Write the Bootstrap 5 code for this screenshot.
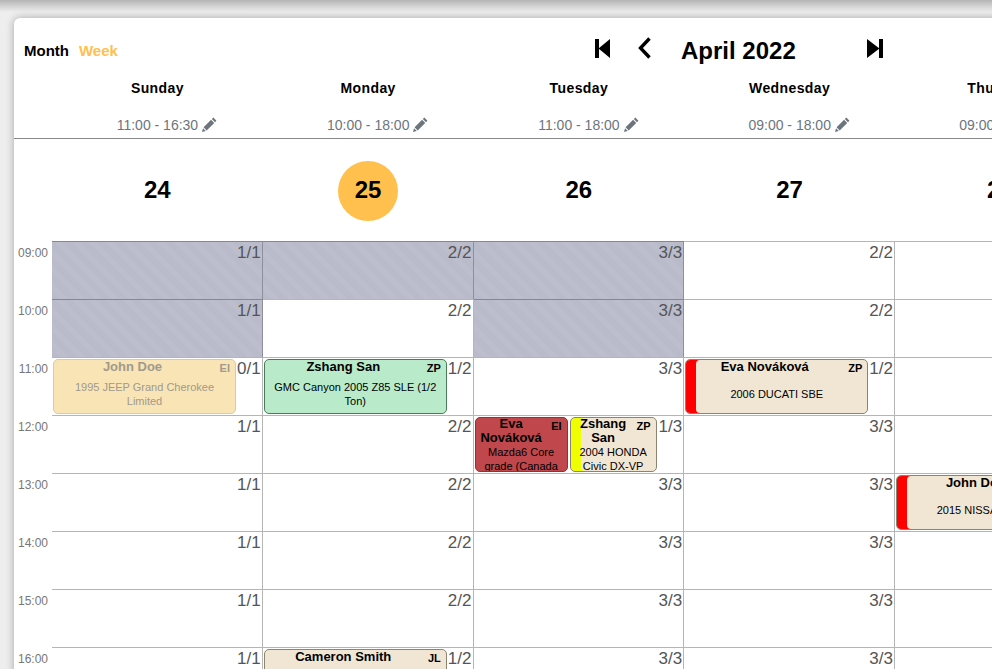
<!doctype html>
<html lang="en">
<head>
<meta charset="utf-8">
<title>Calendar</title>
<link rel="stylesheet" href="https://cdn.jsdelivr.net/npm/bootstrap@5.3.0/dist/css/bootstrap.min.css">
<style>
html,body{height:100%;overflow:hidden}
body{background:#eee;font-family:"Liberation Sans",Arial,sans-serif;color:#000}
.top-shade{height:12px;background:linear-gradient(#b5b5b5,#eee)}
.cal-sheet{margin:6px 0 0 14px;width:1560px;background:#fff;border-radius:6px 0 0 0;box-shadow:0 0 8px rgba(0,0,0,.3)}
.cal-toolbar{height:54px;padding-top:20px}
.view-link{font-size:15px;font-weight:700;color:#000;text-decoration:none;line-height:26px}
.view-link.is-on{color:#ffc04d}
.view-links{gap:10px;padding-left:10px;width:580px}
.nav-ico{display:block;fill:#000;flex:none}
.nav-skip{margin-top:1px}
.nav-back{margin:-1px 0 0 25px}
.month-title{font-size:24px;font-weight:700;line-height:28px;width:185px;margin:-1px 0 0 28px}
.day-heads,.day-nums,.slot-row{display:grid;grid-template-columns:38px repeat(7,210.75px)}
.day-name{font-size:14px;font-weight:700;letter-spacing:.4px;text-align:center;line-height:16px;padding-top:8px;height:44px}
.day-hours{font-size:14px;color:#6c757d;text-align:center;height:22px;line-height:18px}
.day-hours svg{fill:#6c757d;vertical-align:-2px;margin-right:-19px}
.head-rule{border-bottom:1px solid #888}
.day-num{height:102px;display:flex;align-items:center;justify-content:center;font-size:24px;font-weight:700}
.day-num span{width:60px;height:60px;margin-top:2px;padding-bottom:2px;display:flex;align-items:center;justify-content:center;border-radius:50%}
.day-num .is-today{background:#ffc04d}
.slot-row{height:58px}
.hour-lbl{font-size:12px;color:#777;text-align:right;padding:5px 4px 0 0;line-height:14px}
.slot{display:flex;justify-content:flex-end;border-top:1px solid #b5b5b5;border-right:1px solid #b5b5b5;min-width:0;padding-left:1px;overflow:hidden}
.slot.is-off{background:repeating-linear-gradient(45deg,#b9bbcb 0 6px,#bcbecd 6px 12px);border-top-color:#868696;border-right-color:#8f8f9c}
.slot-count{font-size:17px;line-height:20px;color:#555;flex:none;padding:1px 1px 0 1px}
.slot-count.at-left{margin-right:auto}
.appt{flex:none;height:55px;margin-top:1px;border:1px solid #8b8470;border-radius:5px;background:#f1e6d3;position:relative;overflow:hidden;text-align:center;font-size:11px;line-height:14px;color:#000}
.appt.is-wide{width:183px}
.appt.is-first{width:93px;margin-right:2px}
.appt.is-second{width:87px;margin-right:1px}
.appt-name{font-size:13px;font-weight:700;padding-right:20px;line-height:14px;margin-top:-1px}
.appt.is-wide .appt-name{padding-right:24px;margin-top:0}
.appt-init{position:absolute;right:5px;top:2px;font-size:11px;font-weight:700;line-height:13px}
.appt-desc{display:flex;align-items:center;justify-content:center;min-height:28px;margin-top:6px;padding:0 6px}
.appt.is-first .appt-desc,.appt.is-second .appt-desc{display:block;margin-top:0;padding:0 2px}
.appt.is-green{background:#b9ebcb;border-color:#4a7a5a}
.appt.is-ghost{background:#f9e4b6;border-color:#d8cda0;color:#a09a8c}
.appt.is-red{background:#c0474b;border-color:#8b3537}
.appt.has-red{box-shadow:inset 10px 0 0 #f00}
.appt.has-yellow{box-shadow:inset 10px 0 0 #f0ff00}
</style>
</head>
<body>
<div class="top-shade"></div>
<div class="cal-sheet">
  <div class="cal-toolbar d-flex align-items-start">
    <div class="view-links d-flex">
      <a class="view-link" href="#">Month</a>
      <a class="view-link is-on" href="#">Week</a>
    </div>
    <svg class="nav-ico nav-skip" width="18" height="20" viewBox="0 0 18 20"><rect x="1" y="0" width="4" height="19"/><path d="M16 0v19L4.500 9.500z"/></svg>
    <svg class="nav-ico nav-back" width="16" height="24" viewBox="0 0 16 24"><path d="M12.500 1.500 3.500 11 12.500 20.500" fill="none" stroke="#000" stroke-width="3.400"/></svg>
    <div class="month-title">April 2022</div>
    <svg class="nav-ico nav-skip" width="18" height="20" viewBox="0 0 18 20"><rect x="13" y="0" width="4" height="19"/><path d="M1 0v19L13.500 9.500z"/></svg>
  </div>
  <div class="day-heads">
    <div></div>
    <div class="day-name">Sunday</div><div class="day-name">Monday</div><div class="day-name">Tuesday</div><div class="day-name">Wednesday</div><div class="day-name">Thursday</div><div class="day-name">Friday</div><div class="day-name">Saturday</div>
  </div>
  <div class="day-heads head-rule">
    <div></div>
    <div class="day-hours">11:00 - 16:30 <svg width="15" height="15" viewBox="0 0 16 16"><path d="M12.100.6 15.400 3.900 13.800 5.500 10.500 2.200zM9.700 3 13 6.300 5 14.300 1.700 11zM1.100 12 4 14.900 0 16z"/></svg></div>
    <div class="day-hours">10:00 - 18:00 <svg width="15" height="15" viewBox="0 0 16 16"><path d="M12.100.6 15.400 3.900 13.800 5.500 10.500 2.200zM9.700 3 13 6.300 5 14.300 1.700 11zM1.100 12 4 14.900 0 16z"/></svg></div>
    <div class="day-hours">11:00 - 18:00 <svg width="15" height="15" viewBox="0 0 16 16"><path d="M12.100.6 15.400 3.900 13.800 5.500 10.500 2.200zM9.700 3 13 6.300 5 14.300 1.700 11zM1.100 12 4 14.900 0 16z"/></svg></div>
    <div class="day-hours">09:00 - 18:00 <svg width="15" height="15" viewBox="0 0 16 16"><path d="M12.100.6 15.400 3.900 13.800 5.500 10.500 2.200zM9.700 3 13 6.300 5 14.300 1.700 11zM1.100 12 4 14.900 0 16z"/></svg></div>
    <div class="day-hours">09:00 - 18:00 <svg width="15" height="15" viewBox="0 0 16 16"><path d="M12.100.6 15.400 3.900 13.800 5.500 10.500 2.200zM9.700 3 13 6.300 5 14.300 1.700 11zM1.100 12 4 14.900 0 16z"/></svg></div>
    <div class="day-hours"></div><div class="day-hours"></div>
  </div>
  <div class="day-nums">
    <div></div>
    <div class="day-num"><span>24</span></div><div class="day-num"><span class="is-today">25</span></div><div class="day-num"><span>26</span></div><div class="day-num"><span>27</span></div><div class="day-num"><span>28</span></div><div class="day-num"><span>29</span></div><div class="day-num"><span>30</span></div>
  </div>

  <div class="slot-row"><div class="hour-lbl">09:00</div>
    <div class="slot is-off"><span class="slot-count">1/1</span></div><div class="slot is-off"><span class="slot-count">2/2</span></div><div class="slot is-off"><span class="slot-count">3/3</span></div><div class="slot"><span class="slot-count">2/2</span></div><div class="slot"></div>
  </div>
  <div class="slot-row"><div class="hour-lbl">10:00</div>
    <div class="slot is-off"><span class="slot-count">1/1</span></div><div class="slot"><span class="slot-count">2/2</span></div><div class="slot is-off"><span class="slot-count">3/3</span></div><div class="slot"><span class="slot-count">2/2</span></div><div class="slot"></div>
  </div>
  <div class="slot-row"><div class="hour-lbl">11:00</div>
    <div class="slot"><div class="appt is-wide is-ghost"><div class="appt-name">John Doe</div><div class="appt-init">EI</div><div class="appt-desc"><span>1995 JEEP Grand Cherokee Limited</span></div></div><span class="slot-count at-left">0/1</span></div>
    <div class="slot"><div class="appt is-wide is-green"><div class="appt-name">Zshang San</div><div class="appt-init">ZP</div><div class="appt-desc"><span>GMC Canyon 2005 Z85 SLE (1/2 Ton)</span></div></div><span class="slot-count at-left">1/2</span></div>
    <div class="slot"><span class="slot-count">3/3</span></div>
    <div class="slot"><div class="appt is-wide has-red"><div class="appt-name">Eva Nováková</div><div class="appt-init">ZP</div><div class="appt-desc"><span>2006 DUCATI SBE</span></div></div><span class="slot-count at-left">1/2</span></div>
    <div class="slot"></div>
  </div>
  <div class="slot-row"><div class="hour-lbl">12:00</div>
    <div class="slot"><span class="slot-count">1/1</span></div>
    <div class="slot"><span class="slot-count">2/2</span></div>
    <div class="slot"><div class="appt is-first is-red"><div class="appt-name">Eva Nováková</div><div class="appt-init">EI</div><div class="appt-desc">Mazda6 Core grade (Canada</div></div><div class="appt is-second has-yellow"><div class="appt-name">Zshang San</div><div class="appt-init">ZP</div><div class="appt-desc">2004 HONDA Civic DX-VP</div></div><span class="slot-count">1/3</span></div>
    <div class="slot"><span class="slot-count">3/3</span></div>
    <div class="slot"></div>
  </div>
  <div class="slot-row"><div class="hour-lbl">13:00</div>
    <div class="slot"><span class="slot-count">1/1</span></div><div class="slot"><span class="slot-count">2/2</span></div><div class="slot"><span class="slot-count">3/3</span></div><div class="slot"><span class="slot-count">3/3</span></div>
    <div class="slot"><div class="appt is-wide has-red"><div class="appt-name">John Doe</div><div class="appt-desc"><span>2015 NISSAN Altima</span></div></div><span class="slot-count at-left">1/3</span></div>
  </div>
  <div class="slot-row"><div class="hour-lbl">14:00</div>
    <div class="slot"><span class="slot-count">1/1</span></div><div class="slot"><span class="slot-count">2/2</span></div><div class="slot"><span class="slot-count">3/3</span></div><div class="slot"><span class="slot-count">3/3</span></div><div class="slot"></div>
  </div>
  <div class="slot-row"><div class="hour-lbl">15:00</div>
    <div class="slot"><span class="slot-count">1/1</span></div><div class="slot"><span class="slot-count">2/2</span></div><div class="slot"><span class="slot-count">3/3</span></div><div class="slot"><span class="slot-count">3/3</span></div><div class="slot"></div>
  </div>
  <div class="slot-row"><div class="hour-lbl">16:00</div>
    <div class="slot"><span class="slot-count">1/1</span></div>
    <div class="slot"><div class="appt is-wide"><div class="appt-name">Cameron Smith</div><div class="appt-init">JL</div></div><span class="slot-count at-left">1/2</span></div>
    <div class="slot"><span class="slot-count">3/3</span></div><div class="slot"><span class="slot-count">3/3</span></div><div class="slot"></div>
  </div>
</div>
<script src="https://cdn.jsdelivr.net/npm/bootstrap@5.3.0/dist/js/bootstrap.bundle.min.js"></script>
</body>
</html>
